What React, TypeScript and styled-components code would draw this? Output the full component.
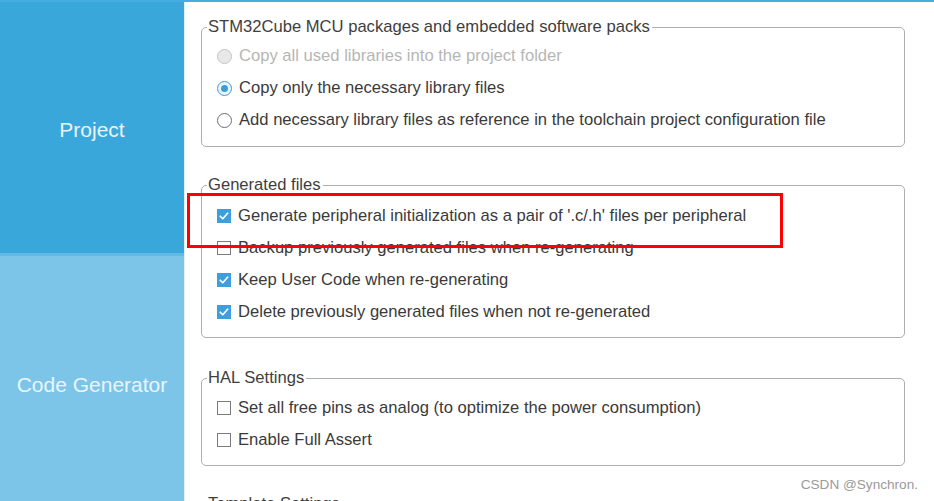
import React from "react";
import styled, { createGlobalStyle } from "styled-components";

const GlobalStyle = createGlobalStyle`
  html, body {
    margin: 0;
    padding: 0;
    background: #ffffff;
  }
  body {
    font-family: "Liberation Sans", Arial, sans-serif;
  }
`;

type Option = { label: string; checked?: boolean; disabled?: boolean };

const packOptions: Option[] = [
  { label: "Copy all used libraries into the project folder", disabled: true },
  { label: "Copy only the necessary library files", checked: true },
  {
    label:
      "Add necessary library files as reference in the toolchain project configuration file",
  },
];

const generatedOptions: Option[] = [
  {
    label: "Generate peripheral initialization as a pair of '.c/.h' files per peripheral",
    checked: true,
  },
  { label: "Backup previously generated files when re-generating" },
  { label: "Keep User Code when re-generating", checked: true },
  { label: "Delete previously generated files when not re-generated", checked: true },
];

const halOptions: Option[] = [
  { label: "Set all free pins as analog (to optimize the power consumption)" },
  { label: "Enable Full Assert" },
];

const RadioMark = ({ checked, disabled }: { checked?: boolean; disabled?: boolean }) => (
  <Radio $checked={checked} $disabled={disabled}>
    {checked && <RadioDot />}
  </Radio>
);

const CheckMark = ({ checked }: { checked?: boolean }) =>
  checked ? (
    <CheckOn>
      <svg width="14" height="14" viewBox="0 0 14 14">
        <path
          d="M3.2 7.2 L5.8 9.8 L10.8 4"
          fill="none"
          stroke="#ffffff"
          strokeWidth="1.6"
          strokeLinecap="round"
          strokeLinejoin="round"
        />
      </svg>
    </CheckOn>
  ) : (
    <CheckOff />
  );

const App = () => {
  return (
    <>
      <GlobalStyle />
      <Page>
        <Sidebar>
          <Tab $active>Project</Tab>
          <Tab>Code Generator</Tab>
        </Sidebar>
        <Content>
          <Group $top={4} $bottom={10}>
            <Legend>STM32Cube MCU packages and embedded software packs</Legend>
            {packOptions.map((o) => (
              <Row key={o.label} $disabled={o.disabled}>
                <RadioMark checked={o.checked} disabled={o.disabled} />
                {o.label}
              </Row>
            ))}
          </Group>
          <Group $top={6} $bottom={9}>
            <Legend>Generated files</Legend>
            {generatedOptions.map((o) => (
              <Row key={o.label}>
                <CheckMark checked={o.checked} />
                {o.label}
              </Row>
            ))}
          </Group>
          <Group $top={5} $bottom={9} $shift={2}>
            <Legend>HAL Settings</Legend>
            {halOptions.map((o) => (
              <Row key={o.label}>
                <CheckMark checked={o.checked} />
                {o.label}
              </Row>
            ))}
          </Group>
          <Group $top={6} $bottom={10}>
            <Legend>Template Settings</Legend>
            <Row>Select a template to generate customized code</Row>
          </Group>
          <Highlight />
          <Watermark>CSDN @Synchron.</Watermark>
        </Content>
      </Page>
    </>
  );
};

const Page = styled.div`
  display: flex;
  height: 501px;
  box-sizing: border-box;
  border-top: 2px solid #46ade0;
  overflow: hidden;
`;

const Sidebar = styled.div`
  width: 184px;
  flex-shrink: 0;
  display: flex;
  flex-direction: column;
  border-right: 1px solid #dff0fa;
`;

const Tab = styled.div<{ $active?: boolean }>`
  height: ${({ $active }) => ($active ? "251px" : "260px")};
  flex-shrink: 0;
  display: flex;
  align-items: center;
  justify-content: center;
  padding-top: ${({ $active }) => ($active ? "4px" : "0")};
  box-sizing: border-box;
  font-size: 21px;
  color: #e9f5fc;
  background: ${({ $active }) => ($active ? "#3aa7da" : "#7cc5e8")};
  border-top: ${({ $active }) => ($active ? "none" : "3px solid #62b9e4")};
`;

const Content = styled.div`
  position: relative;
  flex: 1;
  padding: 16px 29px 0 16px;
  display: flex;
  flex-direction: column;
  gap: 29px;
`;

const Group = styled.fieldset<{ $top: number; $bottom: number; $shift?: number }>`
  margin: ${({ $shift }) => `${$shift ?? 0}px 0 0 0`};
  padding: ${({ $top, $bottom }) => `${$top}px 14px ${$bottom}px 15px`};
  border: 1px solid #acaeb1;
  border-radius: 5px;
  flex-shrink: 0;
`;

const Legend = styled.legend`
  margin-left: -10px;
  padding: 0 2px 0 1px;
  font-size: 16.6px;
  line-height: 18px;
  color: #3e3e3e;
`;

const Row = styled.div<{ $disabled?: boolean }>`
  height: 32px;
  display: flex;
  align-items: center;
  gap: 7px;
  font-size: 16.6px;
  color: ${({ $disabled }) => ($disabled ? "#b6b6b6" : "#3a3a3a")};
  white-space: nowrap;
`;

const Radio = styled.span<{ $checked?: boolean; $disabled?: boolean }>`
  width: 15px;
  height: 15px;
  box-sizing: border-box;
  border-radius: 50%;
  display: flex;
  align-items: center;
  justify-content: center;
  flex-shrink: 0;
  border: 1.5px solid
    ${({ $checked, $disabled }) =>
      $disabled ? "#c4c4c4" : $checked ? "#3d9cdb" : "#6f6f6f"};
  background: ${({ $disabled, $checked }) =>
    $disabled ? "#e8e8e8" : $checked ? "#eaf5fc" : "#ffffff"};
`;

const RadioDot = styled.span`
  width: 7px;
  height: 7px;
  border-radius: 50%;
  background: #3d9cdb;
`;

const CheckOn = styled.span`
  width: 14px;
  height: 14px;
  flex-shrink: 0;
  display: flex;
  background: #3f9fdc;
`;

const CheckOff = styled.span`
  width: 14px;
  height: 14px;
  box-sizing: border-box;
  flex-shrink: 0;
  border: 1px solid #7b7b7b;
  background: #ffffff;
`;

const Highlight = styled.div`
  position: absolute;
  left: 2px;
  top: 191px;
  width: 596px;
  height: 55px;
  box-sizing: border-box;
  border: 3px solid #ff0000;
  pointer-events: none;
`;

const Watermark = styled.div`
  position: absolute;
  right: 16px;
  bottom: 9px;
  font-size: 13.6px;
  color: #9a9a9a;
`;

export default App;
